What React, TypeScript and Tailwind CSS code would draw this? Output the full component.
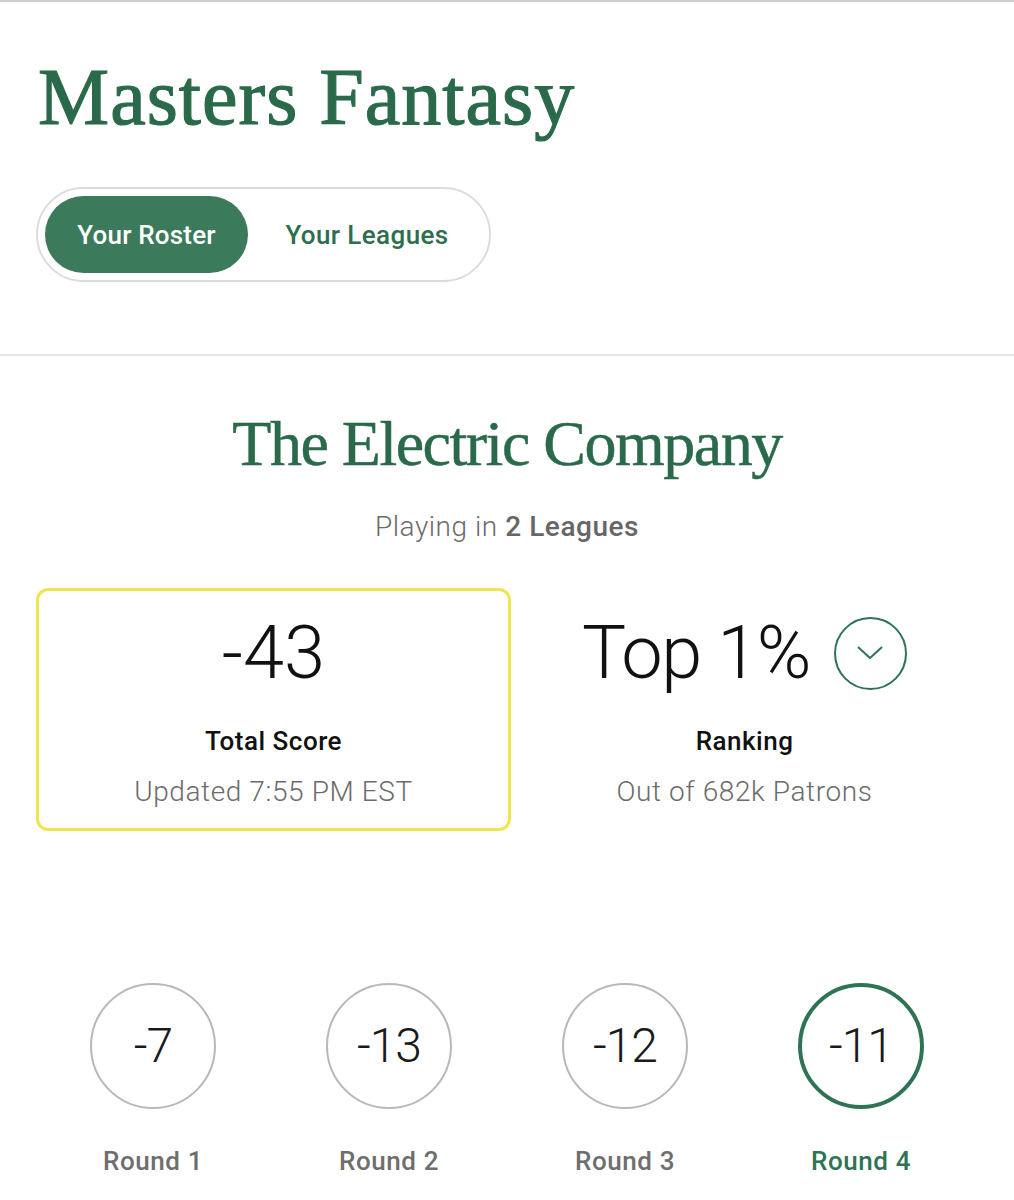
import React from "react";

const serif = "font-['Liberation_Serif',_'Times_New_Roman',_serif]";
const sans = "font-['Roboto',_'Liberation_Sans',_Arial,_sans-serif]";

function Chevron() {
  return (
    <svg width="26" height="14" viewBox="0 0 26 14" fill="none">
      <path d="M1.5 1.5 L13 12 L24.5 1.5" stroke="#2e7354" strokeWidth="2" strokeLinecap="round" strokeLinejoin="round" />
    </svg>
  );
}

const rounds = [
  { label: "Round 1", score: "-7", active: false },
  { label: "Round 2", score: "-13", active: false },
  { label: "Round 3", score: "-12", active: false },
  { label: "Round 4", score: "-11", active: true },
];

export default function App() {
  return (
    <div className={`w-[1014px] min-h-[1200px] bg-white border-t-2 border-[#cfcfcf] ${sans}`}>
      <header className="px-[36px] pb-[72px] border-b-2 border-[#e6e6e6]">
        <h1
          className={`${serif} mt-[55px] text-[80px] leading-[80px] text-[#2a6a4a] tracking-[1px] [-webkit-text-stroke:1.2px_#2a6a4a] pl-[2px]`}
        >
          Masters Fantasy
        </h1>
        <div className="mt-[50px] w-[455px] h-[95px] rounded-full border-2 border-[#dcdcdc] p-[7px] flex items-center">
          <div className="w-[203px] h-full rounded-full bg-[#3b7a5b] flex items-center justify-center text-white text-[26px] font-medium leading-none tracking-[0.2px]">
            Your Roster
          </div>
          <div className="flex-1 h-full flex items-center justify-center text-[#2d6e4e] text-[26px] font-medium leading-none tracking-[0.4px] pl-[4px]">
            Your Leagues
          </div>
        </div>
      </header>

      <section className="flex flex-col items-center">
        <h2
          className={`${serif} mt-[56px] text-[64px] leading-[64px] text-[#2a6a4a] tracking-[-1.5px] [-webkit-text-stroke:0.5px_#2a6a4a]`}
        >
          The Electric Company
        </h2>
        <p className="mt-[37px] text-[28px] leading-[28px] text-[#6b6b6b] font-light tracking-[0.55px]">
          Playing in <span className="font-medium text-[#666666]">2 Leagues</span>
        </p>
      </section>

      <section className="mt-[47px] px-[36px] grid grid-cols-[475px_1fr]">
        <div className="h-[243px] rounded-[12px] border-[3px] border-[#f2e350] flex flex-col items-center pt-[25px]">
          <div className="text-[74px] leading-[74px] font-light text-[#111111]">-43</div>
          <div className="mt-[38px] text-[26px] leading-[26px] font-medium text-[#111111] tracking-[0.5px]">Total Score</div>
          <div className="mt-[24px] text-[28px] leading-[28px] font-light text-[#6b6b6b] tracking-[0.6px]">Updated 7:55 PM EST</div>
        </div>
        <div className="flex flex-col items-center pt-[28px]">
          <div className="flex items-center gap-[24px]">
            <div className="text-[74px] leading-[74px] font-light text-[#111111] tracking-[-1.5px]">Top 1%</div>
            <div className="w-[73px] h-[73px] rounded-full border-2 border-[#2e7354] flex items-center justify-center">
              <Chevron />
            </div>
          </div>
          <div className="mt-[38px] text-[26px] leading-[26px] font-medium text-[#111111] tracking-[0.5px]">Ranking</div>
          <div className="mt-[24px] text-[28px] leading-[28px] font-light text-[#6b6b6b] tracking-[0.6px]">Out of 682k Patrons</div>
        </div>
      </section>

      <section className="mt-[152px] px-[35px] grid grid-cols-4">
        {rounds.map((r) => (
          <div key={r.label} className="flex flex-col items-center">
            <div
              className={
                r.active
                  ? "w-[126px] h-[126px] rounded-full border-4 border-[#2e7354] flex items-center justify-center"
                  : "w-[126px] h-[126px] rounded-full border-2 border-[#b8b8b8] flex items-center justify-center"
              }
            >
              <span className="text-[48px] leading-[48px] font-light text-[#1a1a1a] tracking-[-1px]">{r.score}</span>
            </div>
            <div
              className={
                r.active
                  ? "mt-[40px] text-[26px] leading-[25px] font-medium text-[#2e7354] tracking-[0.6px]"
                  : "mt-[40px] text-[26px] leading-[25px] font-medium text-[#6e6e6e] tracking-[0.6px]"
              }
            >
              {r.label}
            </div>
          </div>
        ))}
      </section>
    </div>
  );
}
